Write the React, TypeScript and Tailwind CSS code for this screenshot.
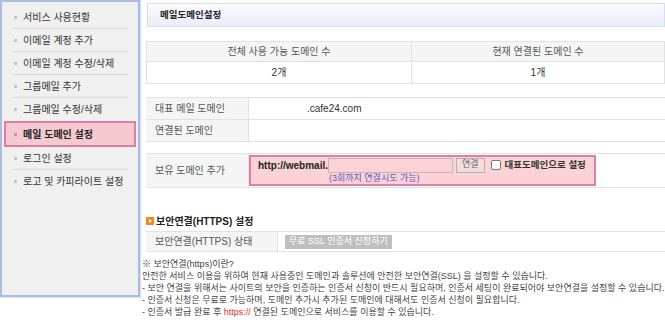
import React from "react";

const F = { fontFamily: '"Liberation Sans", "Noto Sans CJK KR", sans-serif' };

const menu = [
  "서비스 사용현황",
  "이메일 계정 추가",
  "이메일 계정 수정/삭제",
  "그룹메일 추가",
  "그룹메일 수정/삭제",
  "메일 도메인 설정",
  "로그인 설정",
  "로고 및 카피라이트 설정",
];

function Sidebar() {
  return (
    <div className="w-[140px] h-[297px] shrink-0 border-2 border-[#a9bce4] bg-[#f0f0f0] px-[2px] pt-[4px] shadow-[0_0_0_1px_#d6e0f4]">
      {menu.map((m, i) => {
        const active = i === 5;
        const noLine = i === 4 || i === 5 || i === 7;
        if (active) {
          return (
            <div
              key={m}
              className="h-[26px] flex items-center border-2 border-[#d9809e] bg-[#f4c9cf] pl-[8px] text-[10px] font-bold text-[#222]"
            >
              <span className="w-[3px] h-[3px] bg-[#b8a0a8] mr-[6px]" />
              {m}
            </div>
          );
        }
        return (
          <div key={m} className="mx-[8px]">
            <div
              className={`h-[23px] flex items-center text-[10px] text-[#333] ${noLine ? "" : "border-b border-[#d8d8d8]"}`}
            >
              <span className="w-[3px] h-[3px] bg-[#c4c4c4] ml-[2px] mr-[6px]" />
              {m}
            </div>
          </div>
        );
      })}
    </div>
  );
}

export default function App() {
  return (
    <div style={F} className="w-[665px] h-[325px] overflow-hidden bg-white flex">
      <Sidebar />
      <div className="flex-1 ml-[6px] pt-[3px] min-w-0">
        <div className="ml-[1px] h-[24px] border border-[#d9dfea] bg-gradient-to-b from-[#fbfcfe] to-[#e8edf7] flex items-center pl-[12px] text-[9.5px] font-bold text-[#222]">
          메일도메인설정
        </div>

        <div className="mt-[14px] border border-[#e2e2e2] text-[10px] text-[#555]">
          <div className="flex h-[20px] bg-[#f5f5f5] border-b border-[#e2e2e2]">
            <div className="w-[265px] border-r border-[#e2e2e2] flex items-center justify-center">전체 사용 가능 도메인 수</div>
            <div className="flex-1 flex items-center justify-center">현재 연결된 도메인 수</div>
          </div>
          <div className="flex h-[21px] text-[#333]">
            <div className="w-[265px] border-r border-[#e2e2e2] flex items-center justify-center">2개</div>
            <div className="flex-1 flex items-center justify-center">1개</div>
          </div>
        </div>

        <div className="mt-[13px] border-y border-[#e2e2e2] text-[10px] text-[#555]">
          <div className="flex h-[22px] border-b border-[#e2e2e2]">
            <div className="w-[103px] bg-[#f5f5f5] border-r border-[#e2e2e2] flex items-center pl-[9px]">대표 메일 도메인</div>
            <div className="flex-1 flex items-center pl-[58px] text-[#333]">.cafe24.com</div>
          </div>
          <div className="flex h-[21px]">
            <div className="w-[103px] bg-[#f5f5f5] border-r border-[#e2e2e2] flex items-center pl-[9px]">연결된 도메인</div>
            <div className="flex-1" />
          </div>
        </div>

        <div className="mt-[11px] border-y border-[#e2e2e2] text-[10px] text-[#555] flex h-[35px]">
          <div className="w-[103px] bg-[#f5f5f5] border-r border-[#e2e2e2] flex items-center pl-[9px]">보유 도메인 추가</div>
          <div className="flex-1 py-[1px]">
            <div className="w-[347px] h-full border-2 border-[#de7fa6] bg-[#fbd3d6] flex flex-col">
              <div className="flex items-center h-[17px] pl-[7px]">
                <span className="font-bold text-[#222] text-[10px]">http://webmail.</span>
                <span className="w-[125px] h-[15px] border border-[#c8b4b8] bg-[#fbd3d6]" />
                <span className="ml-[3px] h-[15px] px-[5px] border border-[#b8b0b0] bg-[#f2dcdc] text-[9px] text-[#666] flex items-center">연결</span>
                <span className="ml-[6px] w-[10px] h-[10px] border border-[#777] rounded-[2px] bg-white" />
                <span className="ml-[4px] font-bold text-[#333] text-[9.5px]">대표도메인으로 설정</span>
              </div>
              <div className="pl-[78px] text-[9px] text-[#5a5ac0] leading-[11px]">(3회까지 연결시도 가능)</div>
            </div>
          </div>
        </div>

        <div className="mt-[26px] flex items-center h-[14px] text-[10px] font-bold text-[#222]">
          <span className="w-[8px] h-[8px] bg-[#f08a1c] mr-[2px] flex items-center justify-center">
            <span className="w-0 h-0 border-y-[2px] border-y-transparent border-l-[3px] border-l-white" />
          </span>
          보안연결(HTTPS) 설정
        </div>

        <div className="mt-[3px] border-y border-[#e2e2e2] text-[10px] text-[#555] flex h-[21px]">
          <div className="w-[132px] bg-[#f5f5f5] border-r border-[#e2e2e2] flex items-center pl-[9px]">보안연결(HTTPS) 상태</div>
          <div className="flex-1 flex items-center pl-[7px]">
            <span className="h-[14px] px-[4px] bg-[#bfbfbf] text-white text-[9px] flex items-center">무료 SSL 인증서 신청하기</span>
          </div>
        </div>

        <div className="mt-[6px] text-[9px] leading-[12px] text-[#444] whitespace-nowrap -ml-[4px]">
          <div>※ 보안연결(https)이란?</div>
          <div>안전한 서비스 이용을 위하여 현재 사용중인 도메인과 솔루션에 안전한 보안연결(SSL) 을 설정할 수 있습니다.</div>
          <div>- 보안 연결을 위해서는 사이트의 보안을 인증하는 인증서 신청이 반드시 필요하며, 인증서 세팅이 완료되어야 보안연결을 설정할 수 있습니다.</div>
          <div>- 인증서 신청은 무료로 가능하며, 도메인 추가시 추가된 도메인에 대해서도 인증서 신청이 필요합니다.</div>
          <div>- 인증서 발급 완료 후 <span className="text-[#e0301e]">https://</span> 연결된 도메인으로 서비스를 이용할 수 있습니다.</div>
        </div>
      </div>
    </div>
  );
}
